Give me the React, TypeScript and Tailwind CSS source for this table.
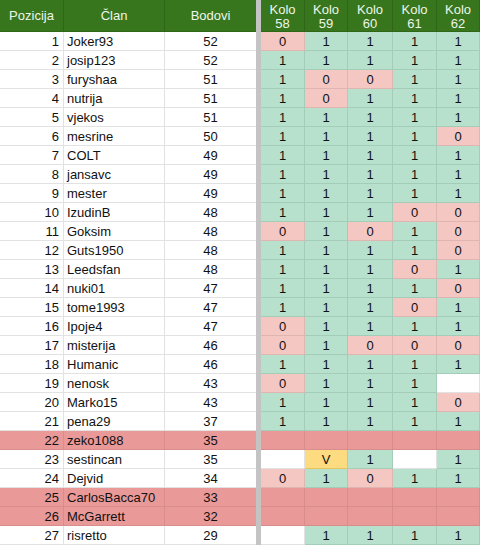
type Cell = "0" | "1" | "" | "V";

type Row = { pos: number; name: string; pts: number; kola: Cell[]; out?: boolean };

const ROWS: Row[] = [
  { pos: 1, name: "Joker93", pts: 52, kola: ["0", "1", "1", "1", "1"] },
  { pos: 2, name: "josip123", pts: 52, kola: ["1", "1", "1", "1", "1"] },
  { pos: 3, name: "furyshaa", pts: 51, kola: ["1", "0", "0", "1", "1"] },
  { pos: 4, name: "nutrija", pts: 51, kola: ["1", "0", "1", "1", "1"] },
  { pos: 5, name: "vjekos", pts: 51, kola: ["1", "1", "1", "1", "1"] },
  { pos: 6, name: "mesrine", pts: 50, kola: ["1", "1", "1", "1", "0"] },
  { pos: 7, name: "COLT", pts: 49, kola: ["1", "1", "1", "1", "1"] },
  { pos: 8, name: "jansavc", pts: 49, kola: ["1", "1", "1", "1", "1"] },
  { pos: 9, name: "mester", pts: 49, kola: ["1", "1", "1", "1", "1"] },
  { pos: 10, name: "IzudinB", pts: 48, kola: ["1", "1", "1", "0", "0"] },
  { pos: 11, name: "Goksim", pts: 48, kola: ["0", "1", "0", "1", "0"] },
  { pos: 12, name: "Guts1950", pts: 48, kola: ["1", "1", "1", "1", "0"] },
  { pos: 13, name: "Leedsfan", pts: 48, kola: ["1", "1", "1", "0", "1"] },
  { pos: 14, name: "nuki01", pts: 47, kola: ["1", "1", "1", "1", "0"] },
  { pos: 15, name: "tome1993", pts: 47, kola: ["1", "1", "1", "0", "1"] },
  { pos: 16, name: "Ipoje4", pts: 47, kola: ["0", "1", "1", "1", "1"] },
  { pos: 17, name: "misterija", pts: 46, kola: ["0", "1", "0", "0", "0"] },
  { pos: 18, name: "Humanic", pts: 46, kola: ["1", "1", "1", "1", "1"] },
  { pos: 19, name: "nenosk", pts: 43, kola: ["0", "1", "1", "1", ""] },
  { pos: 20, name: "Marko15", pts: 43, kola: ["1", "1", "1", "1", "0"] },
  { pos: 21, name: "pena29", pts: 37, kola: ["1", "1", "1", "1", "1"] },
  { pos: 22, name: "zeko1088", pts: 35, kola: ["", "", "", "", ""], out: true },
  { pos: 23, name: "sestincan", pts: 35, kola: ["", "V", "1", "", "1"] },
  { pos: 24, name: "Dejvid", pts: 34, kola: ["0", "1", "0", "1", "1"] },
  { pos: 25, name: "CarlosBacca70", pts: 33, kola: ["", "", "", "", ""], out: true },
  { pos: 26, name: "McGarrett", pts: 32, kola: ["", "", "", "", ""], out: true },
  { pos: 27, name: "risretto", pts: 29, kola: ["", "1", "1", "1", "1"] },
];

const KOLA = [58, 59, 60, 61, 62];
const KOLO_W = ["w-[44px]", "w-[43px]", "w-[45px]", "w-[44px]", "w-[43px]"];

function kolaClass(v: Cell, out?: boolean) {
  if (out) return "bg-[#ea9999] border-[#d98c8c]";
  if (v === "1") return "bg-[#b7e1cd] border-[#a3cdb8]";
  if (v === "0") return "bg-[#f4c7c3] border-[#dfb5b1]";
  if (v === "V") return "bg-[#fddb80] border-[#e6c45c]";
  return "bg-white border-[#e2e2e2]";
}

export default function App() {
  return (
    <div className="w-[480px] h-[546px] overflow-hidden bg-white text-[13px] leading-none text-[#111] font-['Liberation_Sans',Arial,sans-serif]">
      <div className="flex h-[32px] bg-[#38761d] text-[#eef5ea]">
        <div className="flex w-[64px] items-center justify-center border-r border-b border-[#2f6618]">Pozicija</div>
        <div className="flex w-[101px] items-center justify-center border-r border-b border-[#2f6618]">Član</div>
        <div className="flex w-[91px] items-center justify-center border-b border-[#2f6618]">Bodovi</div>
        <div className="w-[5px] bg-[#c4c4c4]" />
        {KOLA.map((k, i) => (
          <div
            key={k}
            className={`flex ${KOLO_W[i]} flex-col items-center justify-center border-r border-b border-[#2f6618] pt-[3px] leading-[14px]`}
          >
            <span>Kolo</span>
            <span>{k}</span>
          </div>
        ))}
      </div>
      {ROWS.map((r) => {
        const base = r.out ? "bg-[#ea9999] border-[#d98c8c]" : "bg-white border-[#e2e2e2]";
        return (
          <div key={r.pos} className="flex h-[19px]">
            <div className={`flex w-[64px] items-center justify-end border-r border-b pr-[4px] ${base}`}>{r.pos}</div>
            <div className={`flex w-[101px] items-center border-r border-b pl-[3px] ${base}`}>{r.name}</div>
            <div className={`flex w-[91px] items-center justify-center border-b ${base}`}>{r.pts}</div>
            <div className="w-[5px] bg-[#c4c4c4]" />
            {r.kola.map((v, i) => (
              <div
                key={i}
                className={`flex ${KOLO_W[i]} items-center justify-center border-r border-b ${kolaClass(v, r.out)}`}
              >
                {v}
              </div>
            ))}
          </div>
        );
      })}
    </div>
  );
}
